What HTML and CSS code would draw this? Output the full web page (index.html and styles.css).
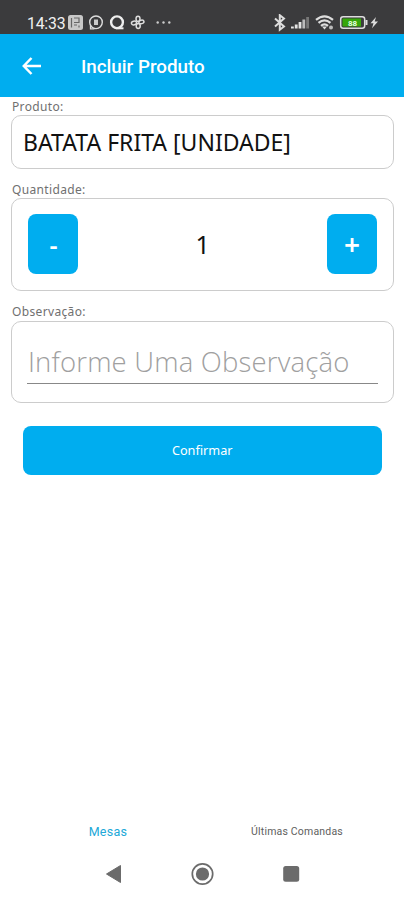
FILE: index.html
```html
<!DOCTYPE html>
<html lang="pt-BR">
<head>
<meta charset="utf-8">
<title>Incluir Produto</title>
<link rel="stylesheet" href="styles.css">
</head>
<body>
<div class="status">
  <span class="clock">14:33</span>
  <svg class="status-left" width="104" height="18" viewBox="68 14 104 18" fill="none" stroke="#ddd" stroke-width="1.5">
    <rect x="68" y="15" width="15" height="15" rx="2.5" fill="#c8c8c8" stroke="none"/>
    <path d="M71.500 18v9.500M74 18h5v4.500h-5M74 25h3M79 25.500v2" stroke="#666" stroke-width="1.200"/>
    <circle cx="96" cy="22.300" r="6.300" stroke-width="1.400"/>
    <path d="M90.500 25.500v3.300h4" stroke-width="1.300"/>
    <rect x="94" y="19.500" width="4" height="5.500" fill="#ccc" stroke="none"/>
    <circle cx="117" cy="22.300" r="5.900" stroke="#eee" stroke-width="2.400"/>
    <path d="M118 28.300h5.500" stroke="#eee" stroke-width="2"/>
    <g stroke-width="1.500">
      <ellipse cx="138" cy="18.800" rx="2" ry="2.600"/>
      <ellipse cx="141.400" cy="22" rx="2.600" ry="1.800" transform="rotate(-15 141 22)"/>
      <ellipse cx="138.200" cy="26" rx="2" ry="2.400"/>
      <ellipse cx="134" cy="23" rx="2.600" ry="1.800" transform="rotate(-15 134 23)"/>
    </g>
    <g fill="#ccc" stroke="none"><circle cx="157.700" cy="22.500" r="1.200"/><circle cx="163.500" cy="22.500" r="1.200"/><circle cx="169.300" cy="22.500" r="1.200"/></g>
  </svg>
  <svg class="status-right" width="106" height="18" viewBox="273 14 106 18" fill="none" stroke="#ddd">
    <path d="M275 18.500l9 8-4.200 3.300V15.200l4.200 3.300-9 8" stroke-width="2"/>
    <g stroke="none" fill="#e4e4e4"><rect x="291" y="26.500" width="2.800" height="2"/><rect x="294.800" y="24.500" width="2.800" height="4"/><rect x="298.600" y="22" width="2.800" height="6.500"/><rect x="302.400" y="19.500" width="2.800" height="9" fill="#bbb"/><rect x="306.200" y="17" width="2.800" height="11.500" fill="#777"/></g>
    <path d="M316 19.800q8.500-7 17 0M318.500 22.800q6-5 12 0M321 25.800q3.500-3 7 0" stroke-width="2.200"/>
    <path d="M322 26.500h5l-2.500 3z" fill="#ddd" stroke="none"/><circle cx="331" cy="27.500" r="2" fill="#bbb" stroke="none"/>
    <rect x="340.700" y="16.700" width="24" height="11.600" rx="2.500" stroke-width="1.500"/>
    <rect x="342.500" y="18.500" width="18.500" height="8" fill="#36a70a" stroke="none"/>
    <path d="M366.500 20v5" stroke-width="2"/>
    <text class="charge" x="348" y="25.500">88</text>
    <path d="M376 17l-5.500 6.300h3l-1.500 5 6-6.800h-3.300z" fill="#ddd" stroke="none"/>
  </svg>
</div>
<header class="bar">
  <svg width="20" height="18" viewBox="0 0 20 18" fill="none" stroke="#fff" stroke-width="2.500"><path d="M19 9H2M9.500 1L1.800 9l7.700 8"/></svg>
  <h1>Incluir Produto</h1>
</header>
<main>
  <div class="label l1">Produto:</div>
  <section class="card product"><span>BATATA FRITA [UNIDADE]</span></section>
  <div class="label l2">Quantidade:</div>
  <section class="card quantity">
    <button class="step minus"><span>-</span></button><span class="count">1</span><button class="step plus"><span>+</span></button>
  </section>
  <div class="label l3">Observação:</div>
  <section class="card note"><div class="field"><span>Informe Uma Observação</span></div></section>
  <button class="confirm">Confirmar</button>
</main>
<nav class="tabs"><div class="active"><span>Mesas</span></div><div class="other"><span>Últimas Comandas</span></div></nav>
<footer class="system">
  <svg width="195" height="24" viewBox="105 862 195 24" fill="#6b6b6b">
    <path d="M106.500 874L120.500 865.500v17z" stroke="#6b6b6b" stroke-linejoin="round"/>
    <circle cx="202.500" cy="874" r="6.600"/><circle cx="202.500" cy="874" r="10.200" fill="none" stroke="#6b6b6b" stroke-width="1.700"/>
    <rect x="283.200" y="866" width="16" height="15.800" rx="2.500"/>
  </svg>
</footer>
</body>
</html>
```
FILE: styles.css
```css
* { box-sizing: border-box; }
body { margin: 0; width: 404px; height: 900px; display: flex; flex-direction: column; background: #fff; font-family: "Noto Sans", sans-serif; overflow: hidden; }
button { border: 0; padding: 0; color: #fff; background: #00adef; font-family: inherit; }
span { white-space: nowrap; }
.status { height: 34px; flex: none; background: #3b3b3d; display: flex; padding: 14px 25px 0 27px; }
.clock { font: 400 15.800px/19px Roboto, sans-serif; color: #f0f0f0; width: 41px; letter-spacing: -.2px; }
.status-right { margin-left: auto; }
.charge { font: 700 8px Roboto, sans-serif; fill: #e8ffe0; stroke: none; }
.bar { height: 63px; flex: none; background: #00adef; color: #fff; display: flex; align-items: center; padding-left: 22px; }
.bar h1 { margin: 3px 0 0 39px; font: 500 18.800px/24px Roboto, sans-serif; }
main { padding: 0 10.500px 0 11px; display: flex; flex-direction: column; }
.label { font-size: 12px; letter-spacing: .35px; line-height: 20px; height: 18px; color: #707070; padding-left: 1px; }
.l2 { margin-top: 11px; }
.l3 { margin-top: 12px; line-height: 18px; }
.card { border: 1px solid #ccc; border-radius: 10px; }
.product { height: 54px; display: flex; align-items: center; padding-left: 11px; font-size: 23px; color: #111; }
.quantity { height: 93px; display: flex; align-items: center; justify-content: space-between; padding: 0 16px 1px; }
.count { font-size: 25px; color: #111; padding-left: 1px; }
.step { width: 50px; height: 60px; border-radius: 8px; font-size: 25px; font-weight: 600; }
.minus { padding-left: 1px; }
.note { height: 82px; padding: 19px 15px 0; }
.field { height: 43px; border-bottom: 1px solid #888; padding-left: 1px; font: 300 27.500px/42px "Open Sans", "Noto Sans", sans-serif; letter-spacing: .18px; color: #a0a0a0; }
.plus { font-size: 28px; padding-left: 1px; }
.confirm { height: 49px; margin: 23px 12px 0; padding-bottom: 1px; border-radius: 8px; font-size: 12.700px; }
.tabs { margin-top: auto; height: 24px; display: flex; align-items: center; font-family: Roboto, sans-serif; }
.tabs div { width: 50%; text-align: center; }
.active { color: #20a8d8; font-size: 12.500px; letter-spacing: .3px; padding-left: 14px; }
.other { color: #606060; font-size: 10.500px; letter-spacing: .18px; padding: 1px 12px 0 0; }
.system { height: 57px; display: flex; align-items: center; padding: 4px 0 0 105px; }
```
